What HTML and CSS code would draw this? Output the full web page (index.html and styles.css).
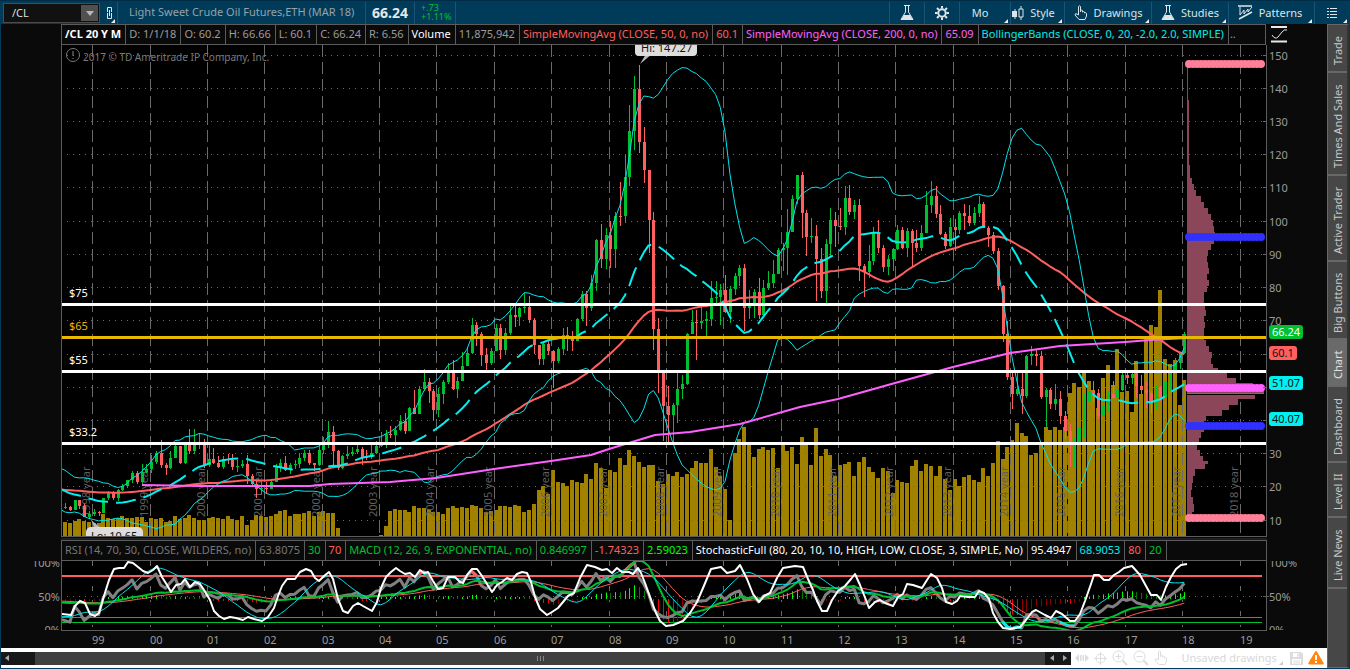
FILE: index.html
```html
<!DOCTYPE html>
<html lang="en">
<head>
<meta charset="utf-8">
<title>/CL Chart</title>
<link rel="stylesheet" href="styles.css">
</head>
<body>
<div class="app">
  <header class="toolbar">
    <div class="symbol">
      <input class="symbol-input" type="text" value="/CL" aria-label="Symbol">
      <button class="symbol-drop" type="button" aria-label="Recent symbols"><svg width="8" height="5" viewBox="0 0 8 5"><path d="M0 0h8L4 5z" fill="#b8b8b8"/></svg></button>
    </div>
    <button class="tool link" type="button" aria-label="Link"><svg width="10" height="14" viewBox="0 0 10 14" fill="none" stroke="#dfe6ea"><path d="M3.500 6V1.500h4V6M3.500 7v5.500h4V7M5.500 4v6"/></svg><i class="corner"></i></button>
    <h1 class="name">Light Sweet Crude Oil Futures,ETH (MAR 18)</h1>
    <strong class="last">66.24</strong>
    <div class="change"><span>+.73</span><span>+1.11%</span></div>
    <div class="spacer"></div>
    <button class="tool w35" type="button" aria-label="Analyze"><svg width="14" height="16" viewBox="0 0 14 16"><path d="M4 .5h6M5.500 1v6L1 14.500h12L8.500 7V1" fill="none" stroke="#dfe6ea"/><path d="M4 10h6l3 5H1z" fill="#dfe6ea"/></svg></button>
    <button class="tool w35" type="button" aria-label="Settings"><svg width="16" height="16" viewBox="-8 -8 16 16" fill="none" stroke="#dfe6ea"><circle r="3.700" stroke-width="2"/><path stroke-width="2" d="M0-7v2.500M0 7V4.500M-7 0h2.500M7 0H4.500M-5-5l1.800 1.800M5 5L3.200 3.200M-5 5l1.800-1.800M5-5L3.200-3.200"/></svg></button>
    <button class="tool w39" type="button">Mo<i class="corner"></i></button>
    <button class="tool w65" type="button"><svg width="12" height="14" viewBox="0 0 12 14"><path d="M3 3v10M9 0v3M9 11v3" stroke="#dfe6ea"/><path d="M0 5h5v6H0z" fill="#dfe6ea"/><path d="M7 3h4v8H7z" fill="none" stroke="#dfe6ea"/></svg>Style<i class="corner"></i></button>
    <button class="tool w87" type="button"><svg width="14" height="16" viewBox="0 0 14 16" fill="none" stroke="#dfe6ea"><path d="M4.500 10V1.500q1-1.500 2 0V7V5.500q1-1 2 0V7q1-1 2 0v1q1.500-1 2 .500V11l-1.500 3.500h-6L1 10q0-2 2-1z"/></svg>Drawings<i class="corner"></i></button>
    <button class="tool w77" type="button"><svg width="14" height="16" viewBox="0 0 14 16"><path d="M4 .5h6M5.500 1v6L1 14.500h12L8.500 7V1" fill="none" stroke="#dfe6ea"/><path d="M4 10h6l3 5H1z" fill="#dfe6ea"/></svg>Studies<i class="corner"></i></button>
    <button class="tool w85" type="button"><svg width="15" height="15" viewBox="0 0 15 15" fill="none" stroke="#dfe6ea"><path d="M0 1h14M1 14L14 7" stroke-width="1.500"/><path d="M2 2v8l4-5v4l4-5v3l4-5"/></svg>Patterns<i class="corner"></i></button>
    <button class="tool w36" type="button" aria-label="Menu"><svg width="10" height="11" viewBox="0 0 10 11" stroke="#dfe6ea"><path d="M0 1.500h2M3 1.500h7M0 4.500h2M3 4.500h7M0 7.500h2M3 7.500h7M0 10.500h2M3 10.500h7"/></svg><i class="corner"></i></button>
  </header>

  <div class="body">
    <main class="charts">
      <div class="legend-row">
        <div class="legend">
          <b class="cell">/CL 20 Y M</b><span class="cell">D: 1/1/18</span><span class="cell">O: 60.2</span><span class="cell">H: 66.66</span><span class="cell">L: 60.1</span><span class="cell">C: 66.24</span><span class="cell">R: 6.56</span><span class="cell white">Volume</span><span class="cell">11,875,942</span><span class="cell red">SimpleMovingAvg (CLOSE, 50, 0, no)</span><span class="cell red">60.1</span><span class="cell magenta">SimpleMovingAvg (CLOSE, 200, 0, no)</span><span class="cell magenta">65.09</span><span class="cell cyan">BollingerBands (CLOSE, 0, 20, -2.0, 2.0, SIMPLE)</span><span class="cell more">..</span>
        </div>
        <button class="scale" type="button" aria-label="Scale"><svg width="17" height="17" viewBox="0 0 17 17" fill="none" stroke="#e8e8e8"><path d="M0 1h16M0 15.500h16" stroke-width="2"/><path d="M1 9q3 5 6 2l4-5q2-3 5-2"/></svg></button>
      </div>
      <svg id="price" class="plot" viewBox="1 45 1326 495" role="img" aria-label="Price chart"></svg>
      <div class="legend-row lower">
        <div class="legend">
          <span class="cell dim">RSI (14, 70, 30, CLOSE, WILDERS, no)</span><span class="cell dim">63.8075</span><span class="cell green">30</span><span class="cell red">70</span><span class="cell green">MACD (12, 26, 9, EXPONENTIAL, no)</span><span class="cell green">0.846997</span><span class="cell red">-1.74323</span><span class="cell lime">2.59023</span><span class="cell white">StochasticFull (80, 20, 10, 10, HIGH, LOW, CLOSE, 3, SIMPLE, No)</span><span class="cell white">95.4947</span><span class="cell cyan">68.9053</span><span class="cell red">80</span><span class="cell green">20</span><span class="cell more"></span>
        </div>
      </div>
      <svg id="studies" class="plot" viewBox="1 561 1326 87" role="img" aria-label="Study chart"></svg>
      <footer class="bottom">
        <div class="scroll">
          <button type="button" class="arrow first" aria-label="Scroll left"><svg width="4" height="6" viewBox="0 0 4 6"><path d="M4 0v6L0 3z" fill="#aaa"/></svg></button>
          <div class="thumb"><i></i><i></i><i></i></div>
          <button type="button" class="arrow" aria-label="Step left"><svg width="4" height="6" viewBox="0 0 4 6"><path d="M4 0v6L0 3z" fill="#aaa"/></svg></button>
          <button type="button" class="arrow" aria-label="Step right"><svg width="4" height="6" viewBox="0 0 4 6"><path d="M0 0v6l4-3z" fill="#aaa"/></svg></button>
        </div>
        <div class="actions">
          <button type="button" aria-label="Expand"><svg width="14" height="10" viewBox="0 0 14 10" fill="#dcdcdc"><path d="M0 5l4-4v8zM14 5l-4-4v8zM5 2h1.500v6H5zM7.500 2H9v6H7.500z"/></svg></button>
          <button type="button" aria-label="Crosshair"><svg width="13" height="13" viewBox="0 0 13 13" fill="none" stroke="#dcdcdc"><circle cx="6.500" cy="6.500" r="4.500"/><path d="M6.500 0v13M0 6.500h13"/></svg></button>
          <button type="button" aria-label="Zoom in"><svg width="16" height="16" viewBox="0 0 16 16" fill="none" stroke="#dcdcdc"><circle cx="6.500" cy="6.500" r="5.500"/><path d="M6.500 3.500v6M3.500 6.500h6"/><path d="M10.500 10.500l4.500 4.500" stroke-width="2"/></svg></button>
          <button type="button" aria-label="Zoom out"><svg width="16" height="16" viewBox="0 0 16 16" fill="none" stroke="#dcdcdc"><circle cx="6.500" cy="6.500" r="5.500"/><path d="M3.500 6.500h6"/><path d="M10.500 10.500l4.500 4.500" stroke-width="2"/></svg></button>
          <button type="button" aria-label="Pan"><svg width="14" height="16" viewBox="0 0 14 16" fill="none" stroke="#dcdcdc"><path d="M4.500 10V1.500q1-1.500 2 0V7V5.500q1-1 2 0V7q1-1 2 0v1q1.500-1 2 .500V11l-1.500 3.500h-6L1 10q0-2 2-1z"/></svg></button>
          <button type="button" class="drawings">Unsaved drawings<i class="corner grey"></i></button>
          <button type="button" aria-label="Save"><svg width="13" height="13" viewBox="0 0 13 13"><path d="M0 0h11l2 2v11H0z" fill="#dcdcdc"/><path d="M3 1h6v4H3zM2 7h9v5H2z" fill="#fff"/><path d="M7 1.500h1.500v3H7zM3 8.500h7v1H3zM3 10.500h7v1H3z" fill="#dcdcdc"/></svg></button>
          <button type="button" aria-label="Warning"><svg width="16" height="14" viewBox="0 0 16 14"><path d="M7 .8q1-1.500 2 0l6.500 11q.5 1.500-1 1.700h-13Q0 13.300.5 11.800z" fill="#ff8410"/><path d="M7 4h2v5H7zM7 10h2v2H7z" fill="#fff"/></svg></button>
        </div>
      </footer>
    </main>
    <nav class="tabs">
      <button class="tab t48" type="button">Trade</button>
      <button class="tab t103" type="button">Times And Sales</button>
      <button class="tab t86" type="button">Active Trader</button>
      <button class="tab t78" type="button">Big Buttons</button>
      <button class="tab t47 on" type="button">Chart</button>
      <button class="tab t76" type="button">Dashboard</button>
      <button class="tab t55" type="button">Level II</button>
      <button class="tab t71" type="button">Live News</button>
    </nav>
  </div>
</div>
<script src="chart.js"></script>
</body>
</html>
```

FILE: styles.css
```css
* { box-sizing: border-box; }
body { margin: 0; background: #003b5a; font: 11px/16px "Noto Sans", "Open Sans", sans-serif; color: #9b9b9b; }
button { font: inherit; color: inherit; background: none; border: 0; padding: 0; margin: 0; display: flex; align-items: center; justify-content: center; }
h1 { margin: 0; font: inherit; }
svg { display: block; flex: none; }
.app { display: flex; flex-direction: column; padding: 0 1px 1px; border-top: 1px solid #002d45; }
.toolbar { display: flex; height: 23px; padding-top: 1px; }
.symbol { display: flex; width: 97px; height: 20px; margin: 1px 0 0 2px; padding: 1px; background: #111; border: 1px solid #4b4b4b; }
.symbol-input { flex: 1; min-width: 0; border: 0; padding: 0 7px; background: #111; color: #ddd; font: inherit; }
.symbol-drop { width: 17px; background: #505050; }
.tool { position: relative; gap: 6px; border-left: 1px solid #1a5375; color: #dce4e8; line-height: 14px; padding-bottom: 1px; }
.link { width: 17px; border: 0; }
.corner { position: absolute; right: 2px; bottom: 1px; border: 2px solid transparent; border-right-color: #e8eef0; border-bottom-color: #e8eef0; }
.corner.grey { border-right-color: #ccc; border-bottom-color: #ccc; }
.name { width: 248px; padding-left: 11px; border-left: 1px solid #1a5375; line-height: 20px; color: #95a2a8; white-space: nowrap; }
.last { width: 49px; border-left: 1px solid #1a5375; text-align: center; font-size: 14px; line-height: 22px; color: #e4e8ea; }
.change { display: flex; flex-direction: column; width: 42px; padding-left: 6px; border: 1px solid #1a5375; border-width: 0 1px; font-size: 9px; line-height: 9px; color: #00c030; padding-top: 1px; }
.spacer { flex: 1; }
.w35 { width: 35px; } .w36 { width: 35px; } .w39 { width: 51px; padding-right: 10px; } .w65 { width: 54px; padding-right: 8px; } .w87 { width: 87px; } .w77 { width: 77px; } .w85 { width: 86px; padding-right: 3px; }
.body { display: flex; }
.charts { flex: 1; min-width: 0; background: #0a0a0a; }
.legend-row { display: flex; height: 21px; padding-left: 60px; }
.legend { flex: 1; min-width: 0; display: flex; overflow: hidden; border: 1px solid #5c5c5c; background: #0a0a0a; }
.cell { padding: 0 4px 0 3px; border-right: 1px solid #5c5c5c; line-height: 18px; white-space: nowrap; }
.cell.more { flex: 1; border: 0; padding: 0 1px; }
b.cell { color: #fff; }
.dim { color: #777; } .white { color: #fff; } .red { color: #ff5f5f; } .green { color: #00c030; } .lime { color: #00ff00; } .cyan { color: #00ecec; } .magenta { color: #ff60ff; }
.scale { width: 61px; justify-content: flex-start; padding-left: 5px; }
.lower { padding-right: 60px; }
.plot { width: 100%; height: auto; }
.plot text { font: 11px "Noto Sans", "Open Sans", sans-serif; fill: #9b9b9b; }
.plot .year { fill: #5f5f5f; }
.plot .note { fill: #7a7a7a; font-size: 10px; }
.plot .dark { fill: #111; }
.plot .light { fill: #fff; }
.plot .gold { fill: #e6b800; }
.bottom { display: flex; align-items: center; height: 20px; background: #fff; }
.scroll { display: flex; flex: 1; height: 13px; background: #181818; }
.thumb { flex: 1; display: flex; gap: 2px; align-items: center; justify-content: center; background: #404040; }
.thumb i { width: 1px; height: 5px; background: #888; }
.arrow { width: 13px; }
.arrow.first { width: 34px; justify-content: flex-start; padding-left: 4px; }
.actions { display: flex; width: 256px; align-items: center; justify-content: space-between; padding: 0 3px 0 4px; color: #d8d8d8; }
.drawings { position: relative; padding: 0 8px; }
.tabs { display: flex; flex-direction: column; width: 22px; background: #474747; border: 1px solid #686868; border-right: 2px solid #333; }
.tab { writing-mode: vertical-rl; transform: rotate(180deg); width: 19px; padding-bottom: 5px; border-top: 2px solid #686868; color: #c8c8c8; white-space: nowrap; }
.on { background: #6a6a6a; color: #e0e0e0; }
.t48 { height: 48px; } .t103 { height: 103px; } .t86 { height: 86px; } .t78 { height: 78px; } .t47 { height: 47px; } .t76 { height: 76px; } .t55 { height: 55px; } .t71 { height: 71px; }
```

FILE: chart.js
```js
// Monthly closes before the visible range, June 1994 to June 1998.
const before = [19.37,20.3,17.56,18.39,18.19,18.05,17.76,
  18.39,18.49,19.17,20.38,18.89,17.4,17.56,17.84,17.54,17.64,18.18,19.55,
  17.74,19.54,21.47,21.2,19.76,20.92,20.42,22.25,24.38,23.35,23.75,25.92,
  24.15,20.3,20.41,20.21,20.88,19.8,20.14,19.61,21.18,21.08,19.15,17.64,
  17.21,15.44,15.61,15.39,15.2,14.18];
// Visible closes, July 1998 to January 2018.
const close = [14.21,13.34,16.14,14.42,11.22,12.05,
  12.75,12.27,16.76,18.66,16.84,19.29,20.53,22.11,24.51,21.75,24.59,25.6,
  27.64,30.43,26.9,25.74,29.01,32.5,27.43,33.12,30.84,32.7,33.82,26.8,
  28.66,27.39,26.29,28.46,28.37,26.25,26.35,27.2,23.43,21.18,19.44,19.84,
  19.48,21.74,26.31,27.29,25.31,26.86,27.02,28.98,30.45,27.22,26.89,31.2,
  33.51,36.6,31.04,25.8,29.56,30.19,30.54,31.57,29.2,29.11,30.41,32.52,
  33.05,36.16,35.76,37.38,39.88,37.05,43.8,42.12,49.64,51.76,49.13,43.45,
  48.2,51.75,55.4,49.72,51.97,56.5,60.57,68.94,66.24,59.76,57.32,61.04,
  67.92,61.41,66.63,71.88,71.29,73.93,74.4,70.26,62.91,58.73,63.13,61.05,
  58.14,61.79,65.87,65.71,64.01,70.68,78.21,74.04,81.66,94.53,88.71,95.98,
  91.75,101.84,101.58,113.46,127.35,140,124.08,115.46,100.64,67.81,54.43,44.6,
  41.68,44.76,49.66,51.12,66.31,69.89,69.45,69.96,70.61,77,77.28,79.36,
  72.89,79.66,83.76,86.15,73.97,75.63,78.95,71.92,79.97,81.43,84.11,91.38,
  92.19,96.97,106.72,113.93,102.7,95.42,95.7,88.81,79.2,93.19,100.36,98.83,
  98.48,107.07,103.02,104.87,86.53,84.96,88.06,96.47,92.19,86.24,88.91,91.82,
  97.49,92.05,97.23,93.46,91.97,96.56,105.03,107.65,102.33,96.38,92.72,98.42,
  97.49,102.59,101.58,99.74,102.71,105.37,98.17,95.96,91.16,80.54,66.15,53.27,
  48.24,49.76,47.6,59.63,60.3,59.47,47.12,49.2,45.09,46.59,41.65,37.04,
  33.62,33.75,38.34,45.92,49.1,48.33,41.6,44.7,48.24,46.86,49.44,53.72,
  52.81,54.01,50.6,49.33,48.32,46.04,50.17,47.23,51.67,54.38,57.4,60.42,66.24];
const high = [15.3,14.4,16.3,16.2,14.9,12.9,
  13.6,13,16.9,19,18.9,19.4,21.2,22.2,25.1,25.1,27.2,27.1,
  29.9,31,34.3,27.5,30.9,33.7,32.6,33.5,37.5,37.7,36.4,34.5,
  32.7,31.9,29.6,29.5,30.1,30,28.4,28.3,29.9,24,22.4,22.1,
  21.7,22.4,27,28.5,29.5,27.5,28.2,30.3,31.4,31.2,27.5,33.7,
  35.2,40,38.4,31.2,29.9,32.5,32.3,33,32.2,31.4,33.1,33.9,
  36.7,37.4,38.5,38.6,41.9,42.5,44.2,49.4,50.5,55.7,52.9,49.5,
  49.8,52.3,57.6,58.3,53.1,60.9,62.4,70.9,69.7,66.7,62,62,
  69.2,69.2,68,75.4,74.8,74.2,78.4,77.5,71,63,64.1,64.2,
  61.5,62.4,68.1,68.3,67.1,71.1,79,79,84,94.7,99.3,98,
  100.1,103,111.8,120,135,143.7,147.27,128.6,110,102.8,71,55,
  50.5,45.3,54.7,53.9,66.6,73.4,73.3,75.5,73.2,82,82,81.2,
  84,80.5,84.4,87.1,87.2,79.4,79.7,82.9,82.4,85.1,88.6,92.1,
  93.5,103.7,108,114,114.8,103.4,101,99,92,94.7,104,103,
  104,110.6,111,106.5,106.7,87.3,92.9,98.3,100.5,93,90,92.1,
  99,98.3,98,97.9,97.4,99.1,109.3,112.2,110.7,105,97,101,
  100.7,103.3,105.2,105,104.5,107.7,106,98.7,97,92.2,80.9,70,
  55.1,55,54.4,60,62.6,61.8,61,50,50,51,49,43,
  39,35,42.5,48,50.2,52,49.5,48.7,49,51.9,50,54.7,
  55.5,54.5,55,53.8,52,49,50.4,50.5,53,55.2,59.1,60.6,66.66];
const low = [13.6,12.9,13.3,13.6,11,10.65,
  11.5,11.4,12.2,16.3,16.1,15.8,18.9,19.9,21.4,20.9,21,24.5,
  24.3,27,26,23.8,25.7,28.8,27.1,27,30,30.1,31.7,25.8,
  26.3,27.2,25.9,25.7,27.2,25.3,24.7,25.9,21.2,20,16.8,18,
  18,19.8,21.8,24.6,25,24,25.6,26,28,26.8,25,26.5,
  30,31.8,26.3,25.2,25.7,28.6,29.4,30,26.8,28.4,28.6,30.2,
  32.2,32,34.8,32.5,37,36,37,42,42,49,45.3,40.2,
  41.3,45,51,49.2,47,52,56.8,60.2,62.6,56.5,55.4,57,
  61,58.8,60,65.8,68.2,68.5,72.6,69.5,60.2,57,57,60,
  50,57.5,59.8,61,61,64,70,68.6,73,79,86.2,85.8,
  86,86.2,98.6,99.7,110.6,121.6,120.8,111.6,90.5,61.3,48.4,34,
  33.2,33.6,39.4,46.6,50.7,66.3,58.3,67.8,65,68.6,75,69,
  72.4,69.5,78,80.5,67,70.8,71.1,70.7,73,79.5,80,87,
  85,83.9,97,105.3,95,89.6,93.7,76,77,75,89,92.5,
  97.4,96,102,100.7,82,77.3,83,87,90.7,84.7,84,85.2,
  91.5,91.9,89.3,86,91,91.3,97.5,102.7,101,95.9,91.8,92.3,
  91.2,96.3,97.4,98.7,98.9,101.5,98,92.5,90.4,79.4,63.7,52.4,
  43.6,47.4,42,47,57,56.5,46.7,38,43.7,43.2,39,34.5,
  26.2,26.1,33,35.2,43,45.8,40.6,39.2,43,46.6,42.2,49,
  51,51.2,47,48.2,44,42,43.7,46,46,49.1,53.9,55.8,60.1];
// Volume bar heights.
const volume = [14,13,15,17,15,14,13,13,22,18,17,18,20,18,18,19,19,14,
  18,17,18,14,15,20,17,18,21,18,16,16,18,19,18,17,20,17,16,20,11,16,21,20,
  19,20,22,25,26,20,22,22,23,25,20,24,25,23,23,8,0,0,0,0,0,0,0,0,
  1,10,25,27,26,26,24,30,28,28,26,24,24,22,28,30,28,29,28,31,30,28,24,25,
  26,30,30,29,31,30,24,26,32,46,50,42,66,54,53,50,56,54,53,62,57,73,68,48,
  66,64,78,71,86,80,74,69,71,71,55,52,62,60,64,59,62,68,75,
  73,73,87,69,60,47,16,83,97,109,92,79,87,89,86,88,68,92,85,89,72,99,92,71,108,80,87,81,60,
  71,72,74,60,74,79,69,64,58,68,65,43,56,54,53,70,76,65,72,70,60,70,57,46,
  57,50,59,61,56,54,68,60,73,95,77,89,96,113,103,100,81,83,91,109,106,109,106,109,
  143,153,149,163,155,146,128,158,171,151,187,144,145,124,175,142,199,211,209,246,177,172,176,131,156];
const years = [92,150,207,264,322,379,436,494,551,609,666,723,781,838,895,953,1010,1067,1125,1182,1240];
const CYAN = '#00e5ee', RED = '#ff5f5f', GREEN = '#00c030';
const n = close.length, all = before.concat(close), off = before.length;
const X = m => 1184.3 - 4.783 * (n - 1 - m);
const Y = v => 55.5 + (150 - v) * 3.323;

const line = (x1, y1, x2, y2, color, w = 1, extra = '') =>
  `<line x1="${x1}" y1="${y1}" x2="${x2}" y2="${y2}" stroke="${color}" stroke-width="${w}" ${extra}/>`;
const path = (pts, color, w = 1, extra = '') =>
  `<polyline points="${pts.map(p => p[0].toFixed(1) + ',' + p[1].toFixed(1)).join(' ')}" fill="none" stroke="${color}" stroke-width="${w}" stroke-linejoin="round" ${extra}/>`;
const rect = (x, y, w, h, color, extra = '') => `<rect x="${x}" y="${y}" width="${w}" height="${h}" fill="${color}" ${extra}/>`;
const text = (x, y, s, cls = '', extra = '') => `<text x="${x}" y="${y}" class="${cls}" ${extra}>${s}</text>`;
const mean = (end, len) => all.slice(end - len + 1, end + 1).reduce((a, b) => a + b, 0) / len;

function price() {
  let s = rect(62, 45, 1204, 491, '#000') + '<clipPath id="pc"><rect x="62" y="45" width="1204" height="491"/></clipPath><g clip-path="url(#pc)">';
  for (let m = 0; m < n; m++)
    if (volume[m]) s += rect(Math.round(X(m)) - 2, 536 - volume[m], 4, volume[m], '#a08200', 'shape-rendering="crispEdges"');
  for (const x of years) s += line(x + .5, 45, x + .5, 536, '#6a6a6a', 1, 'stroke-dasharray="12 5"');
  for (let v = 10; v <= 150; v += 10) s += line(67, Math.round(Y(v)) - .5, 1266, Math.round(Y(v)) - .5, '#666', 1, 'stroke-dasharray="1 5"');
  years.slice(0, 21).forEach((x, i) => s += text(x - 2, 517, (1998 + i) + ' year', 'year', `transform="rotate(-90 ${x - 2} 517)"`));
  s += '<g shape-rendering="crispEdges">';
  for (let m = 0; m < n; m++) {
    const o = all[off + m - 1], c = close[m], x = Math.round(X(m)), color = c >= o ? GREEN : RED;
    s += rect(x, Y(high[m]), 1, Y(low[m]) - Y(high[m]), color);
    s += rect(x - 1, Y(Math.max(o, c)), 3, Math.max(1, Math.abs(c - o) * 3.323), color);
  }
  s += '</g>';
  const mid = [], up = [], down = [], slow = [];
  for (let m = -1; m < n; m++) {
    const i = off + m, a = mean(i, 20);
    const sd = Math.sqrt(all.slice(i - 19, i + 1).reduce((t, v) => t + (v - a) ** 2, 0) / 20);
    const x = Math.max(62, X(m));
    mid.push([x, Y(a)]); up.push([x, Y(a + 2 * sd)]); down.push([x, Y(a - 2 * sd)]);
    slow.push([x, Y(mean(i, Math.min(50, i + 1)))]);
  }
  s += path(slow, RED, 2) + path(mid, '#00f0f0', 2, 'stroke-dasharray="20 8"') + path(up, CYAN) + path(down, CYAN);
  s += path([[142,485],[200,486],[265,486],[310,486],[330,484],[390,482],[436,478],[494,469],[551,461],[591,455],[609,449],[655,435],[690,432],[740,424],[800,407],[838,399],[895,383],[953,367],[1010,353],[1060,346],[1125,342],[1150,340],[1187,338]], '#ff60ff', 2);
  s += line(1187.5, 64, 1187.5, 100, '#8c4659');
  const profile = [[100,2],[165,3],[172,3],[178,5],[184,7],[190,9],[196,14],[202,17],[208,21],[214,24],[220,26],[226,27],[232,28],[238,27],[244,24],[250,21],[256,20],[262,21],[268,22],[274,20],[280,22],[286,20],[292,17],[298,17],[304,18],[310,19],[316,17],[322,18],[328,17],[334,17],[340,19],[346,22],[352,25],[358,24],[364,26],[368,31],[373,40],[378,49],[383,66],[388,77],[391,77],[394,68],[399,51],[405,42],[410,35],[416,19],[421,17],[426,17],[432,14],[438,12],[444,10],[450,13],[456,16],[461,21],[464,18],[469,8],[476,6],[483,5],[490,4],[497,6],[504,7],[512,5],[520,0]];
  for (let i = 0; i < profile.length - 1; i++) s += rect(1187, profile[i][0], profile[i][1], profile[i + 1][0] - profile[i][0], '#8c4659', 'shape-rendering="crispEdges"');
  s += line(1187, 394.5, 1264, 394.5, '#000') + line(1187, 393.5, 1264, 393.5, '#b04ca8');
  for (const [y, color] of [[304.5, '#fff'], [371.5, '#fff'], [443.5, '#fff'], [337.5, '#e8b800']]) s += line(62, y, 1266, y, color, 3);
  for (const [y, color] of [[64, '#ff7f98'], [237, '#3030ff'], [388, '#ff60ff'], [426, '#3030ff'], [518, '#ff7f98']])
    s += line(1189, y, 1262, y, color, 8, 'stroke-linecap="round" stroke-dasharray="0 4"') + line(1188, y, 1262, y, color, 6);
  s += text(69, 297, '$75', 'light') + text(69, 330, '$65', 'gold') + text(69, 364, '$55', 'light') + text(69, 436, '$33.2', 'light');
  s += '<circle cx="73" cy="55" r="6.500" fill="none" stroke="#777"/>' + line(73, 51, 73, 56, '#888') + line(73, 58, 73, 59, '#888');
  s += text(83, 61, '2017 © TD Ameritrade IP Company, Inc.', 'note');
  s += '<path d="M646 54l-6 10 12-10z" fill="#bbb"/>' + rect(635, 38, 62, 18, '#ddd', 'rx="4"') + text(641, 52, 'Hi: 147.27', 'dark');
  s += '<path d="M91 520l4 8h6z" fill="#bbb"/>' + rect(86, 527, 57, 18, '#ddd', 'rx="5"') + text(91, 540, 'Lo: 10.65', 'dark');
  s += '</g>';
  for (let v = 10; v <= 150; v += 10) {
    const y = Math.round(Y(v));
    s += line(1263, y - .5, 1267, y - .5, '#666');
    // The 40, 50 and 60 levels lie under the price tags.
    if (v < 40 || v > 60) s += text(1269, y + 4, v);
  }
  for (const [y, label, color, w, cls] of [[325, '66.24', GREEN, 34, 'light'], [346, '60.1', RED, 28, 'dark'], [376, '51.07', '#00f0f0', 34, 'dark'], [412, '40.07', '#00f0f0', 34, 'dark']])
    s += rect(1269, y, w, 14, color, 'rx="3"') + text(1272, y + 11, label, cls);
  s += line(61.5, 45, 61.5, 537, '#5c5c5c') + line(1266.5, 45, 1266.5, 537, '#5c5c5c') + line(61, 536.5, 1267, 536.5, '#5c5c5c') + line(61, 539, 1267, 539, '#333');
  document.getElementById('price').innerHTML = s;
}

function studies() {
  const stoch = [62,614,71,615,75,606,80,601,85,603,90,614,95,616,99,613,104,596,109,580,114,569,119,568,124,568,128,562,133,563,138,567,143,571,148,573,153,570,157,566,162,577,167,585,171,592,176,585,181,584,185,579,190,587,195,582,200,584,204,590,210,600,214,611,219,616,224,619,230,617,236,618,243,620,248,617,254,619,262,621,268,617,274,608,278,596,282,586,287,579,295,579,300,572,306,569,311,571,315,578,319,581,324,576,329,572,333,579,338,599,343,611,348,613,353,606,358,603,363,606,372,611,377,602,381,588,386,577,391,572,396,568,400,571,405,574,410,573,415,577,420,570,424,573,428,572,433,581,438,589,443,588,448,577,455,577,460,582,463,583,467,575,472,569,477,569,482,576,487,584,492,592,497,585,502,582,507,578,512,580,517,574,522,572,527,573,531,582,535,597,540,609,547,615,552,612,558,608,563,602,568,596,574,593,580,578,587,565,595,567,602,570,607,569,612,573,617,568,622,572,629,572,633,574,638,568,641,573,645,583,650,597,656,613,660,621,666,626,673,625,683,621,690,613,697,602,703,588,711,569,721,567,727,573,735,571,740,565,747,579,753,594,759,602,764,596,770,593,777,578,783,568,795,566,803,567,808,579,813,590,817,601,822,611,827,611,832,600,838,591,845,586,851,579,855,574,860,585,866,600,869,608,875,602,880,600,885,603,893,606,898,597,903,594,907,584,913,585,922,588,927,580,931,574,937,578,942,588,946,602,952,604,957,601,960,596,968,597,975,597,979,591,984,593,989,599,993,613,998,622,1003,628,1010,629,1020,627,1026,620,1032,612,1036,610,1045,615,1051,618,1056,611,1062,614,1070,621,1075,621,1080,614,1085,601,1091,584,1094,575,1099,575,1104,580,1109,580,1114,575,1119,572,1124,568,1132,566,1140,575,1146,586,1151,595,1157,595,1161,600,1166,587,1171,577,1176,569,1181,565,1187,564];
  const pts = [];
  for (let i = 0; i < stoch.length; i += 2) pts.push([stoch[i], stoch[i + 1]]);
  const at = x => {
    if (x <= pts[0][0]) return 617;
    const k = pts.findIndex(p => p[0] >= x), a = pts[k - 1], b = pts[k];
    return a[1] + (b[1] - a[1]) * (x - a[0]) / (b[0] - a[0]);
  };
  const ema = (src, len) => src.reduce((out, v, i) => (out.push(i ? out[i - 1] + (v - out[i - 1]) * 2 / (len + 1) : v), out), []);
  const fast = ema(all, 12), slow = ema(all, 26), macd = fast.map((v, i) => v - slow[i]), signal = ema(macd, 9);
  const rsi = []; let up = .6, down = .6;
  all.forEach((v, i) => {
    const d = i ? v - all[i - 1] : 0;
    up = (up * 13 + Math.max(0, d)) / 14; down = (down * 13 + Math.max(0, -d)) / 14;
    rsi.push(100 * up / (up + down));
  });
  let s = rect(62, 561, 1204, 69, '#000') + '<clipPath id="sc"><rect x="62" y="561" width="1204" height="69"/></clipPath><g clip-path="url(#sc)">';
  for (const x of years) s += line(x + .5, 561, x + .5, 630, '#6a6a6a', 1, 'stroke-dasharray="5 9 2 9"');
  s += line(67, 596.5, 1266, 596.5, '#666', 1, 'stroke-dasharray="1 5"');
  s += line(62, 576, 1262, 576, RED, 2) + line(62, 617.5, 1262, 617.5, GREEN) + line(62, 622.5, 1262, 622.5, GREEN);
  const M = v => 599 - v * 2.3, R = v => 576 + (70 - v) * 1.15;
  for (let m = 0; m < n; m++) {
    const i = off + m, h = macd[i] - signal[i], rising = h >= macd[i - 1] - signal[i - 1];
    const size = Math.max(2, Math.abs(h) * 2.6), x = Math.round(X(m));
    s += rect(x, h > 0 ? 599 - size : 599, 1, size, h > 0 ? (rising ? '#00ff00' : '#007a00') : (rising ? '#8a0000' : '#ff0000'));
  }
  const series = (arr, f) => close.map((_, m) => [m ? X(m) : 62, f(arr[off + m])]);
  const r = series(rsi, R);
  s += path(r, '#808080', 3);
  for (let m = 1; m < n; m++) {
    const a = rsi[off + m - 1], b = rsi[off + m];
    if (a > 70 && b > 70) s += path([r[m - 1], r[m]], RED, 3);
    if (a < 31 && b < 31) s += path([r[m - 1], r[m]], '#00f0f0', 3);
  }
  s += path(series(signal, M), RED) + path(series(macd, M), GREEN, 2);
  const d = close.map((_, m) => { let t = 0; for (let k = 0; k < 10; k++) t += at(X(m - k)); return [m ? X(m) : 62, t / 10]; });
  s += path(d, CYAN) + path(pts, '#fff', 2) + '</g>';
  s += line(61.5, 561, 61.5, 631, '#5c5c5c') + line(1266.5, 561, 1266.5, 631, '#5c5c5c') + line(61, 630.5, 1267, 630.5, '#5c5c5c');
  s += '<clipPath id="lc"><rect x="1" y="561" width="1326" height="69"/></clipPath><g clip-path="url(#lc)">';
  for (const [y, label] of [[567, '100%'], [601, '50%'], [634, '0%']]) s += text(60, y, label, '', 'text-anchor="end"') + text(1269, y, label);
  s += '</g>' + line(1263, 596.5, 1269, 596.5, '#5c5c5c');
  years.forEach((x, i) => s += text(x, 644, String((99 + i) % 100).padStart(2, '0')));
  document.getElementById('studies').innerHTML = s;
}

price();
studies();
```
